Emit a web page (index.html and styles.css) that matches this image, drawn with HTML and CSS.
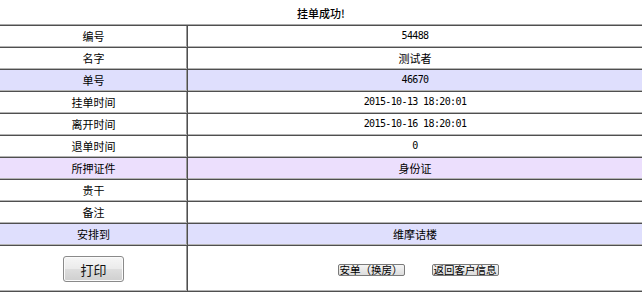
FILE: index.html
```html
<!DOCTYPE html>
<html lang="zh-CN">
<head>
<meta charset="utf-8">
<title>挂单成功</title>
<link rel="stylesheet" href="styles.css">
</head>
<body>
<div class="title">挂单成功!</div>
<table class="info">
  <colgroup><col class="c1"><col class="c2"></colgroup>
  <tbody>
    <tr><td class="k">编号</td><td class="v num">54488</td></tr>
    <tr><td class="k">名字</td><td class="v">测试者</td></tr>
    <tr class="blue"><td class="k">单号</td><td class="v num">46670</td></tr>
    <tr><td class="k">挂单时间　</td><td class="v num">2015-10-13 18:20:01</td></tr>
    <tr><td class="k">离开时间　</td><td class="v num">2015-10-16 18:20:01</td></tr>
    <tr><td class="k">退单时间</td><td class="v num">0</td></tr>
    <tr class="violet"><td class="k">所押证件</td><td class="v">身份证</td></tr>
    <tr><td class="k">贵干</td><td class="v"></td></tr>
    <tr><td class="k">备注</td><td class="v"></td></tr>
    <tr class="blue"><td class="k">安排到</td><td class="v">维摩诘楼</td></tr>
    <tr class="actions">
      <td class="k"><button class="btn-print" type="button">打印</button></td>
      <td class="v">
        <div class="btn-group">
          <button class="btn-small" type="button">安单（换房）</button>
          <button class="btn-small" type="button">返回客户信息</button>
        </div>
      </td>
    </tr>
  </tbody>
</table>
</body>
</html>
```

FILE: styles.css
```css
html, body {
  margin: 0;
  padding: 0;
  background: #ffffff;
}

body {
  font-family: "Noto Sans CJK SC", "DejaVu Sans", sans-serif;
  font-size: 11px;
  color: #000;
}

.title {
  height: 24px;
  line-height: 26px;
  text-align: center;
  font-size: 11px;
  font-weight: 500;
}

.info {
  width: 100%;
  table-layout: fixed;
  border-collapse: separate;
  border-spacing: 0;
  border-top: 1px solid #a9a9a9;
}

.c1 {
  width: 188px;
}

.info td {
  box-sizing: border-box;
  height: 22px;
  padding: 0 0 1px 0;
  text-align: center;
  vertical-align: middle;
  border-top: 1px solid #4f4f4f;
  border-bottom: 0;
  box-shadow: inset 0 -1px 0 #b4b4b4;
  line-height: 18px;
}

.info td.k {
  border-right: 1px solid #4f4f4f;
  box-shadow: inset 0 -1px 0 #b4b4b4, inset -1px 0 0 #9a9a9a;
}

.info tr:last-child td {
  border-bottom: 1px solid #4f4f4f;
}

.num {
  font-family: "DejaVu Sans Mono", "Liberation Mono", monospace;
  font-size: 10px;
  letter-spacing: -0.62px;
}

.blue td {
  background: #dfdffd;
}

.violet td {
  background: #ecdffd;
}

.actions td {
  height: 47px;
  padding: 0;
}

.btn-print {
  width: 61px;
  height: 26px;
  margin-top: 1px;
  padding: 0;
  font-family: "Noto Sans CJK SC", sans-serif;
  font-size: 13px;
  color: #111;
  border: 1px solid #8a8a8a;
  border-radius: 3px;
  background: linear-gradient(#f6f6f6 0%, #ebebeb 48%, #dddddd 52%, #cfcfcf 100%);
  box-shadow: inset 0 0 0 1px #fbfbfb;
}

.btn-group {
  display: flex;
  justify-content: center;
  gap: 27px;
  padding-left: 6px;
  margin-top: 2px;
}

.btn-small {
  height: 12px;
  padding: 0 1px;
  font-family: "Noto Sans CJK SC", sans-serif;
  font-size: 10.5px;
  line-height: 10px;
  color: #000;
  border: 1px solid #7a7a7a;
  border-radius: 2px;
  background: linear-gradient(#f4f4f4, #dcdcdc);
}
```
